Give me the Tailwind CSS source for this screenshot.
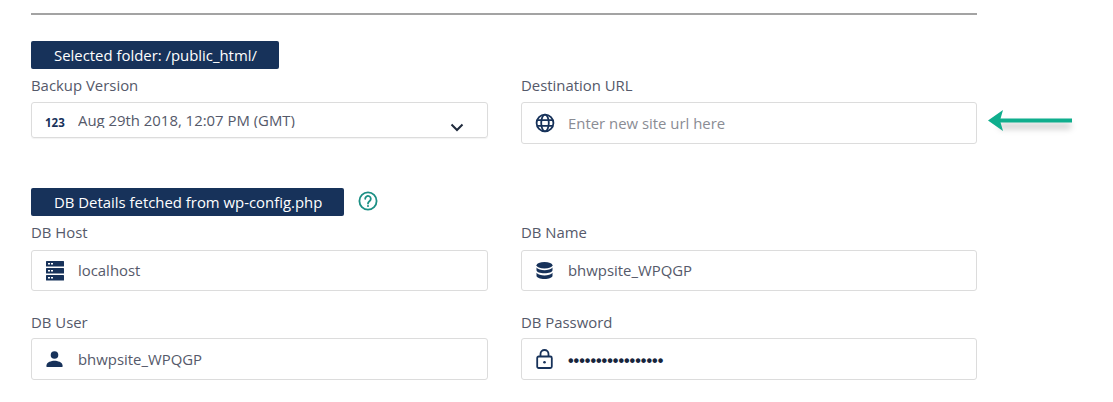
<!DOCTYPE html>
<html>
<head>
<meta charset="utf-8">
<script src="https://cdn.jsdelivr.net/npm/@tailwindcss/browser@4"></script>
</head>
<body class="bg-white">
<div class="w-[1113px] h-[402px] overflow-hidden relative pl-[31px] pt-[13px] font-['Open_Sans','Noto_Sans',sans-serif] text-[14.9px] text-[#55596a]">
  <div class="w-[946px] h-[2px] bg-[#a3a3a3]"></div>

  <div class="mt-[26px] w-[248px] h-[28px] rounded-[2px] bg-[#17325a] text-white flex items-center pl-[23px]">Selected folder: /public_html/</div>

  <div class="mt-[7px] grid grid-cols-[457px_456px] gap-x-[33px] items-start">
    <div>
      <div class="h-[18px] leading-[18px]">Backup Version</div>
      <div class="mt-[8px] h-[36px] rounded-[3px] border border-[#dcdcdc] flex shadow-[0_1px_1px_rgba(0,0,0,0.05)]">
        <span class="w-[46px] pl-[13px] pt-[12px] text-[11.5px] leading-[16px] font-bold text-[#17325a] shrink-0">123</span>
        <div class="h-[25px] overflow-hidden pt-[7px] leading-[20px]">Aug 29th 2018, 12:07 PM (GMT)</div>
        <svg class="ml-auto mr-[23px] mt-[20px]" width="14" height="9" viewBox="0 0 14 9" fill="none" stroke="#1f2a3c" stroke-width="2"><path d="M1.5 1.5 7 7l5.5-5.5"/></svg>
      </div>
    </div>
    <div>
      <div class="h-[18px] leading-[18px]">Destination URL</div>
      <div class="mt-[8px] h-[42px] rounded-[3px] border border-[#dcdcdc] flex items-center">
        <span class="w-[46px] pl-[13px] shrink-0">
          <svg class="block" width="20" height="20" viewBox="0 0 19 19" fill="none" stroke="#17325a" stroke-width="1.7"><circle cx="9.5" cy="9.5" r="8"/><ellipse cx="9.5" cy="9.5" rx="3.6" ry="8"/><path d="M2 6.7h15M2 12.3h15"/></svg>
        </span>
        <span class="text-[#8a8c94]">Enter new site url here</span>
      </div>
    </div>
  </div>

  <div class="mt-[44px] flex items-center">
    <div class="w-[313px] h-[28px] rounded-[2px] bg-[#17325a] text-white flex items-center pl-[23px]">DB Details fetched from wp-config.php</div>
    <svg class="ml-[14px] -mt-[2px]" width="20" height="20" viewBox="0 0 20 20" fill="none" stroke="#1b8f84" stroke-width="1.8"><circle cx="10" cy="10" r="8.6"/><path d="M7.2 7.8a2.8 2.8 0 1 1 4.5 2.2c-1 .8-1.7 1.2-1.700 2.500" stroke-linecap="round"/><circle cx="10" cy="15" r="0.6" fill="#1b8f84" stroke-width="1"/></svg>
  </div>

  <div class="mt-[7px] grid grid-cols-[457px_456px] gap-x-[33px] gap-y-[22px]">
    <div>
      <div class="h-[18px] leading-[18px]">DB Host</div>
      <div class="mt-[9px] h-[41px] rounded-[3px] border border-[#dcdcdc] flex items-center">
        <span class="w-[46px] pl-[14px] shrink-0">
          <svg class="block" width="18" height="20" viewBox="0 0 18 20" fill="#17325a"><rect width="18" height="5.5" rx="0.5"/><rect y="7" width="18" height="5.5" rx="0.5"/><rect y="14" width="18" height="5.5" rx="0.5"/><path fill="#fff" d="M2 2h2v1.4H2zM5 2h2v1.4H5zM2 9h2v1.4H2zM5 9h2v1.4H5zM2 16h2v1.4H2zM5 16h2v1.4H5z"/></svg>
        </span>
        <span>localhost</span>
      </div>
    </div>
    <div>
      <div class="h-[18px] leading-[18px]">DB Name</div>
      <div class="mt-[9px] h-[41px] rounded-[3px] border border-[#dcdcdc] flex items-center">
        <span class="w-[46px] pl-[14px] shrink-0">
          <svg class="block" width="17" height="17" viewBox="0 0 17 17" fill="#17325a"><ellipse cx="8.5" cy="3.2" rx="8" ry="3.2"/><path d="M.5 5.6C2 7.6 5.2 8.2 8.5 8.2s6.500-.6 8-2.600V8.200c0 1.700-3.600 3-8 3s-8-1.300-8-3z"/><path d="M.5 10.800c1.500 2 4.700 2.600 8 2.600s6.500-.6 8-2.600v3c0 1.700-3.600 3.200-8 3.200s-8-1.500-8-3.200z"/></svg>
        </span>
        <span>bhwpsite_WPQGP</span>
      </div>
    </div>
    <div>
      <div class="h-[18px] leading-[18px]">DB User</div>
      <div class="mt-[7px] h-[42px] rounded-[3px] border border-[#dcdcdc] flex items-center">
        <span class="w-[46px] pl-[14px] shrink-0">
          <svg class="block" width="17" height="16" viewBox="0 0 17 16" fill="#17325a"><circle cx="8.500" cy="4" r="3.800"/><path d="M.5 16v-1.800C.5 11.300 5.500 9.800 8.500 9.800s8 1.500 8 4.400V16z"/></svg>
        </span>
        <span>bhwpsite_WPQGP</span>
      </div>
    </div>
    <div>
      <div class="h-[18px] leading-[18px]">DB Password</div>
      <div class="mt-[7px] h-[42px] rounded-[3px] border border-[#dcdcdc] flex items-center">
        <span class="w-[46px] pl-[14px] shrink-0">
          <svg class="block" width="17" height="20" viewBox="0 0 17 20" fill="none" stroke="#17325a" stroke-width="1.800"><rect x="1.200" y="7.500" width="14.600" height="11.500" rx="1.500"/><path d="M4.500 7.500V5a4 4 0 0 1 8 0v2.500"/><circle cx="8.500" cy="13.200" r="1.300" fill="#17325a" stroke="none"/></svg>
        </span>
        <span class="mt-[3px] font-['Liberation_Sans',sans-serif] text-[#17253c] text-[16px] font-bold">•••••••••••••••••</span>
      </div>
    </div>
  </div>

  <svg class="absolute left-[985px] top-[107px]" width="92" height="36" viewBox="0 0 92 36" fill="none">
    <path d="M14 14H86" stroke="#000" stroke-opacity="0.22" stroke-width="5" transform="translate(0 5)" style="filter:blur(3px)"/>
    <path d="M14 13.500H87" stroke="#0fae8d" stroke-width="4"/>
    <path d="M3 13.500 18 3 15 13.500 18 24z" fill="#0fae8d"/>
  </svg>
</div>
</body>
</html>
